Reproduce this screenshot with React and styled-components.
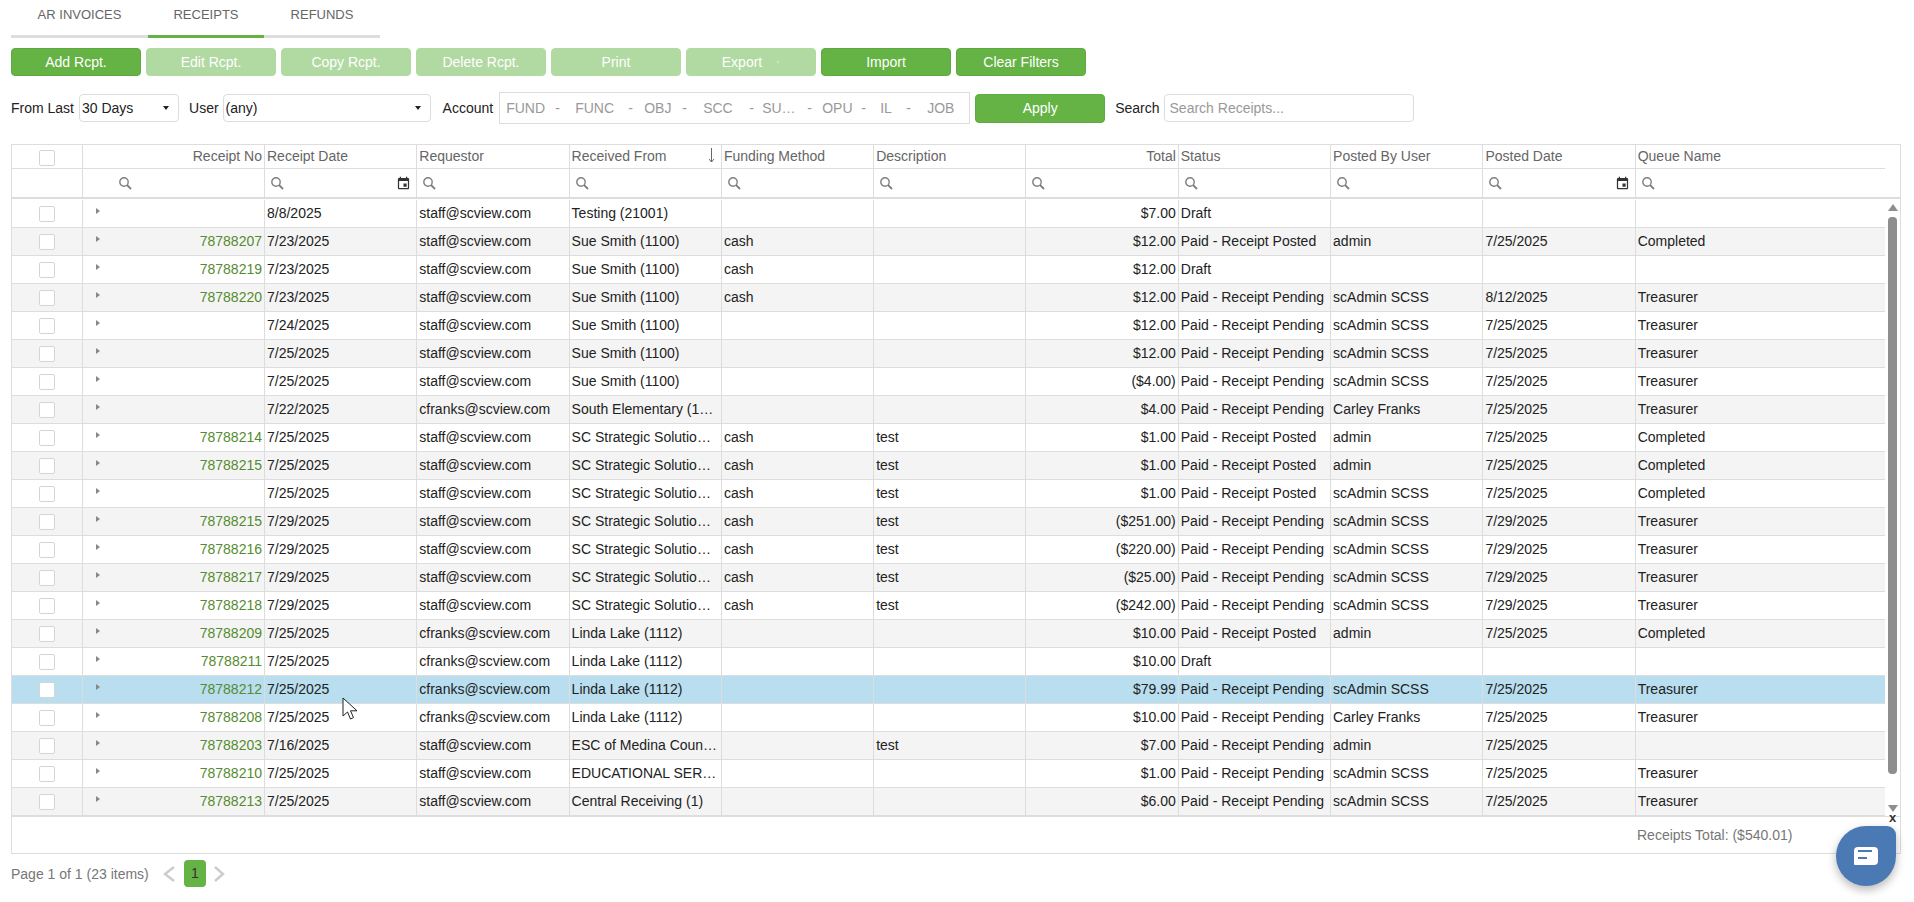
import React from "react";
import styled, { createGlobalStyle } from "styled-components";

const GlobalStyle = createGlobalStyle`
  html, body {
    margin: 0;
    padding: 0;
    background: #fff;
    overflow: hidden;
  }
  body {
    font-family: "Liberation Sans", Arial, sans-serif;
    font-size: 14px;
    color: #222;
  }
  * {
    box-sizing: border-box;
  }
`;

const STAFF = "staff@scview.com";
const CF = "cfranks@scview.com";
const SUE = "Sue Smith (1100)";
const SC = "SC Strategic Solutio…";
const LINDA = "Linda Lake (1112)";
const POSTED = "Paid - Receipt Posted";
const PENDING = "Paid - Receipt Pending";
const SCADMIN = "scAdmin SCSS";

const receipts = [
  ["", "8/8/2025", STAFF, "Testing (21001)", "", "", "$7.00", "Draft", "", "", ""],
  ["78788207", "7/23/2025", STAFF, SUE, "cash", "", "$12.00", POSTED, "admin", "7/25/2025", "Completed"],
  ["78788219", "7/23/2025", STAFF, SUE, "cash", "", "$12.00", "Draft", "", "", ""],
  ["78788220", "7/23/2025", STAFF, SUE, "cash", "", "$12.00", PENDING, SCADMIN, "8/12/2025", "Treasurer"],
  ["", "7/24/2025", STAFF, SUE, "", "", "$12.00", PENDING, SCADMIN, "7/25/2025", "Treasurer"],
  ["", "7/25/2025", STAFF, SUE, "", "", "$12.00", PENDING, SCADMIN, "7/25/2025", "Treasurer"],
  ["", "7/25/2025", STAFF, SUE, "", "", "($4.00)", PENDING, SCADMIN, "7/25/2025", "Treasurer"],
  ["", "7/22/2025", CF, "South Elementary (1…", "", "", "$4.00", PENDING, "Carley Franks", "7/25/2025", "Treasurer"],
  ["78788214", "7/25/2025", STAFF, SC, "cash", "test", "$1.00", POSTED, "admin", "7/25/2025", "Completed"],
  ["78788215", "7/25/2025", STAFF, SC, "cash", "test", "$1.00", POSTED, "admin", "7/25/2025", "Completed"],
  ["", "7/25/2025", STAFF, SC, "cash", "test", "$1.00", POSTED, SCADMIN, "7/25/2025", "Completed"],
  ["78788215", "7/29/2025", STAFF, SC, "cash", "test", "($251.00)", PENDING, SCADMIN, "7/29/2025", "Treasurer"],
  ["78788216", "7/29/2025", STAFF, SC, "cash", "test", "($220.00)", PENDING, SCADMIN, "7/29/2025", "Treasurer"],
  ["78788217", "7/29/2025", STAFF, SC, "cash", "test", "($25.00)", PENDING, SCADMIN, "7/29/2025", "Treasurer"],
  ["78788218", "7/29/2025", STAFF, SC, "cash", "test", "($242.00)", PENDING, SCADMIN, "7/29/2025", "Treasurer"],
  ["78788209", "7/25/2025", CF, LINDA, "", "", "$10.00", POSTED, "admin", "7/25/2025", "Completed"],
  ["78788211", "7/25/2025", CF, LINDA, "", "", "$10.00", "Draft", "", "", ""],
  ["78788212", "7/25/2025", CF, LINDA, "", "", "$79.99", PENDING, SCADMIN, "7/25/2025", "Treasurer"],
  ["78788208", "7/25/2025", CF, LINDA, "", "", "$10.00", PENDING, "Carley Franks", "7/25/2025", "Treasurer"],
  ["78788203", "7/16/2025", STAFF, "ESC of Medina Coun…", "", "test", "$7.00", PENDING, "admin", "7/25/2025", ""],
  ["78788210", "7/25/2025", STAFF, "EDUCATIONAL SER…", "", "", "$1.00", PENDING, SCADMIN, "7/25/2025", "Treasurer"],
  ["78788213", "7/25/2025", STAFF, "Central Receiving (1)", "", "", "$6.00", PENDING, SCADMIN, "7/25/2025", "Treasurer"],
];

const SELECTED_ROW = 17;

const headers = [
  "Receipt Date", "Requestor", "Received From", "Funding Method", "Description",
  "Total", "Status", "Posted By User", "Posted Date", "Queue Name",
];

const actions = [
  { label: "Add Rcpt." },
  { label: "Edit Rcpt.", off: true },
  { label: "Copy Rcpt.", off: true },
  { label: "Delete Rcpt.", off: true },
  { label: "Print", off: true },
  { label: "Export", off: true, caret: true },
  { label: "Import" },
  { label: "Clear Filters" },
];

// [code, text width, dash width]
const accountParts = [
  ["FUND", 49, 20], ["FUNC", 53, 16], ["OBJ", 38, 21], ["SCC", 46, 13], ["SU…", 45, 15],
  ["OPU", 39, 19], ["IL", 26, 21], ["JOB", 30, 0],
];

const COLUMNS = "71px 182px repeat(9, 152.3px) 1fr";

const Page = styled.div`
  width: 1914px;
  height: 902px;
  position: relative;
  overflow: hidden;
  padding: 0 13px 0 11px;
`;

const Tabs = styled.div`
  display: flex;
  height: 38px;
`;

const Tab = styled.div`
  width: ${(p) => p.$w}px;
  height: 38px;
  padding-top: 7px;
  text-align: center;
  font-size: 13px;
  line-height: 16px;
  color: #666;
  border-bottom: 3px solid ${(p) => (p.$active ? "#65b345" : "#ddd")};
`;

const ActionBar = styled.div`
  display: flex;
  gap: 5px;
  margin-top: 10px;
`;

const Button = styled.button`
  width: 130px;
  height: ${(p) => p.$h || 28}px;
  display: inline-flex;
  align-items: center;
  justify-content: center;
  gap: 14px;
  padding: 0;
  border: 1px solid ${(p) => (p.$off ? "#b1d9a2" : "#5dab3e")};
  border-radius: 4px;
  background: ${(p) => (p.$off ? "#b1d9a2" : "#65b345")};
  color: #fff;
  font-family: inherit;
  font-size: 14px;
`;

const ButtonCaret = styled.span`
  width: 0;
  height: 0;
  border-left: 2.5px solid transparent;
  border-right: 2.5px solid transparent;
  border-top: 3px solid #c9e4be;
`;

const FilterBar = styled.div`
  display: flex;
  align-items: center;
  height: 32px;
  margin-top: 16px;
`;

const Label = styled.span`
  margin-left: ${(p) => p.$ml || 0}px;
  margin-right: ${(p) => p.$mr || 0}px;
  white-space: nowrap;
  color: #222;
`;

const Select = styled.div`
  position: relative;
  width: ${(p) => p.$w}px;
  height: 28px;
  line-height: 26px;
  padding-left: 2px;
  border: 1px solid #ddd;
  border-radius: 4px;
  color: #222;
  background: #fff;
`;

const SelectCaret = styled.span`
  position: absolute;
  right: 9px;
  top: 11px;
  width: 0;
  height: 0;
  border-left: 3px solid transparent;
  border-right: 3px solid transparent;
  border-top: 4px solid #222;
`;

const AccountBox = styled.div`
  display: flex;
  align-items: center;
  width: 471px;
  height: 32px;
  margin-right: 5px;
  padding-left: 6px;
  border: 1px solid #ddd;
  color: #999;
`;

const AccountPart = styled.span`
  width: ${(p) => p.$w}px;
  white-space: nowrap;
`;

const SearchInput = styled.input`
  width: 250px;
  height: 28px;
  margin-left: 4px;
  padding: 0 5px;
  border: 1px solid #ddd;
  border-radius: 4px;
  font-family: inherit;
  font-size: 14px;
  &::placeholder {
    color: #999;
    opacity: 1;
  }
`;

const Grid = styled.div`
  margin-top: 20px;
  height: 710px;
  border: 1px solid #ddd;
`;

const GridHead = styled.div`
  padding-right: 15px;
  border-bottom: 2px solid #ddd;
`;

const HeadRow = styled.div`
  display: grid;
  grid-template-columns: ${COLUMNS};
  height: ${(p) => p.$h}px;
  border-bottom: ${(p) => (p.$last ? "none" : "1px solid #ddd")};
`;

const HeadCell = styled.div`
  position: relative;
  display: flex;
  align-items: center;
  justify-content: ${(p) => (p.$right ? "flex-end" : "flex-start")};
  padding: 0 2px 1px;
  color: #666;
  white-space: nowrap;
  border-right: ${(p) => (p.$last ? "none" : "1px solid #ddd")};
`;

const CheckCell = styled.div`
  display: flex;
  align-items: center;
  justify-content: center;
  padding-top: ${(p) => p.$pt || 0}px;
  border-right: 1px solid #ddd;
`;

const Checkbox = styled.span`
  display: block;
  width: 16px;
  height: 16px;
  border: 1px solid #d5d5d5;
  border-radius: 2px;
  background: #fff;
`;

const FilterCell = styled.div`
  display: flex;
  align-items: center;
  justify-content: space-between;
  padding: 0 5px 0 ${(p) => p.$pl || 6}px;
  border-right: ${(p) => (p.$last ? "none" : "1px solid #ddd")};
`;

const SortArrow = styled.svg`
  position: absolute;
  right: 6px;
  top: 3px;
`;

const GridBody = styled.div`
  display: flex;
  height: 617px;
`;

const Rows = styled.div`
  flex: 1;
  min-width: 0;
  padding-top: 1px;
`;

const Row = styled.div`
  display: grid;
  grid-template-columns: ${COLUMNS};
  height: 28px;
  border-bottom: 1px solid #ddd;
  background: ${(p) => (p.$selected ? "#b8deef" : p.$odd ? "#f4f4f4" : "#fff")};
`;

const Cell = styled.div`
  padding: 0 2px;
  line-height: 27px;
  white-space: nowrap;
  overflow: hidden;
  text-overflow: ellipsis;
  text-align: ${(p) => (p.$right ? "right" : "left")};
  color: ${(p) => (p.$link ? "#558b2f" : "#222")};
  border-right: ${(p) => (p.$last ? "none" : "1px solid #ddd")};
`;

const NumberCell = styled(Cell)`
  position: relative;
`;

const Expander = styled.span`
  position: absolute;
  left: 13px;
  top: 8px;
  width: 0;
  height: 0;
  border-top: 3px solid transparent;
  border-bottom: 3px solid transparent;
  border-left: 4px solid #888;
`;

const ScrollBar = styled.div`
  width: 15px;
  display: flex;
  flex-direction: column;
  align-items: center;
  padding-top: 5px;
`;

const ScrollUp = styled.span`
  width: 0;
  height: 0;
  border-left: 5px solid transparent;
  border-right: 5px solid transparent;
  border-bottom: 7px solid #8e8e8e;
`;

const ScrollDown = styled(ScrollUp)`
  border-bottom: none;
  border-top: 7px solid #8e8e8e;
`;

const ScrollThumb = styled.div`
  width: 9px;
  height: 557px;
  margin: 6px 0 31px;
  border-radius: 4px;
  background: #8e8e8e;
`;

const GridFooter = styled.div`
  display: flex;
  align-items: center;
  height: 37px;
  padding-left: 1625px;
  border-top: 1px solid #ddd;
  color: #777;
  white-space: nowrap;
`;

const Pager = styled.div`
  display: flex;
  align-items: center;
  height: 27px;
  margin-top: 6px;
  color: #777;
`;

const PageInfo = styled.span`
  width: 152px;
  white-space: nowrap;
`;

const PageLink = styled.span`
  width: 22px;
  height: 27px;
  margin: 0 8px 0 9px;
  line-height: 27px;
  text-align: center;
  color: #333;
  background: #65b345;
  border-radius: 4px;
`;

const ChatButton = styled.div`
  position: absolute;
  left: 1836px;
  top: 826px;
  width: 60px;
  height: 60px;
  display: flex;
  align-items: center;
  justify-content: center;
  border-radius: 50% 9px 50% 50%;
  background: #4a79b4;
  box-shadow: 0 4px 10px rgba(0, 0, 0, 0.28);
`;

const ChatClose = styled.span`
  position: absolute;
  left: 1889px;
  top: 811px;
  font-size: 13px;
  font-weight: bold;
  line-height: 13px;
  color: #333;
`;

const Cursor = styled.svg`
  position: absolute;
  left: 342px;
  top: 697px;
`;

function SearchIcon() {
  return (
    <svg width="13" height="13" viewBox="0 0 13 13" fill="none" stroke="#7f7f7f">
      <circle cx="5" cy="5" r="4.2" strokeWidth="1.4" />
      <path d="M8 8l4 4" strokeWidth="1.8" />
    </svg>
  );
}

function CalendarIcon() {
  return (
    <svg width="15" height="15" viewBox="0 0 24 24" fill="#333">
      <path d="M17 12h-5v5h5v-5zM16 1v2H8V1H6v2H5c-1.11 0-1.99.9-1.99 2L3 19c0 1.1.89 2 2 2h14c1.1 0 2-.9 2-2V5c0-1.1-.9-2-2-2h-1V1h-2zm3 18H5V8h14v11z" />
    </svg>
  );
}

function Chevron({ flip }) {
  return (
    <svg width="12" height="16" viewBox="0 0 12 16" fill="none" stroke="#ccc" strokeWidth="2.4">
      <path d={flip ? "M1 1l8 7-8 7" : "M11 1L2 8l9 7"} />
    </svg>
  );
}

function ReceiptRow({ data, index }) {
  const [receiptNo, ...rest] = data;
  return (
    <Row $odd={index % 2 === 1} $selected={index === SELECTED_ROW}>
      <CheckCell $pt={1}>
        <Checkbox />
      </CheckCell>
      <NumberCell $right $link>
        <Expander />
        {receiptNo}
      </NumberCell>
      {rest.map((value, i) => (
        <Cell key={i} $right={i === 5} $last={i === rest.length - 1}>
          {value}
        </Cell>
      ))}
    </Row>
  );
}

export default function App() {
  return (
    <Page>
      <GlobalStyle />
      <Tabs>
        <Tab $w={137}>AR INVOICES</Tab>
        <Tab $w={116} $active>RECEIPTS</Tab>
        <Tab $w={116}>REFUNDS</Tab>
      </Tabs>

      <ActionBar>
        {actions.map((a) => (
          <Button key={a.label} $off={a.off}>
            {a.label}
            {a.caret && <ButtonCaret />}
          </Button>
        ))}
      </ActionBar>

      <FilterBar>
        <Label $mr={5}>From Last</Label>
        <Select $w={100}>
          30 Days
          <SelectCaret />
        </Select>
        <Label $ml={10} $mr={4}>User</Label>
        <Select $w={208}>
          (any)
          <SelectCaret />
        </Select>
        <Label $ml={12} $mr={6}>Account</Label>
        <AccountBox>
          {accountParts.map(([code, w, dash]) => (
            <React.Fragment key={code}>
              <AccountPart $w={w}>{code}</AccountPart>
              {dash > 0 && <AccountPart $w={dash}>-</AccountPart>}
            </React.Fragment>
          ))}
        </AccountBox>
        <Button $h={29}>Apply</Button>
        <Label $ml={10}>Search</Label>
        <SearchInput placeholder="Search Receipts..." />
      </FilterBar>

      <Grid>
        <GridHead>
          <HeadRow $h={24}>
            <CheckCell $pt={3}>
              <Checkbox />
            </CheckCell>
            <HeadCell $right>Receipt No</HeadCell>
            {headers.map((h, i) => (
              <HeadCell key={h} $right={h === "Total"} $last={i === headers.length - 1}>
                {h}
                {h === "Received From" && (
                  <SortArrow width="7" height="15" viewBox="0 0 7 15" fill="none" stroke="#666">
                    <path d="M3.5 0v14M1 11l2.5 3L6 11" />
                  </SortArrow>
                )}
              </HeadCell>
            ))}
          </HeadRow>
          <HeadRow $h={28} $last>
            <CheckCell />
            <FilterCell $pl={36}>
              <SearchIcon />
            </FilterCell>
            {headers.map((h, i) => (
              <FilterCell key={h} $last={i === headers.length - 1}>
                <SearchIcon />
                {h.endsWith("Date") && <CalendarIcon />}
              </FilterCell>
            ))}
          </HeadRow>
        </GridHead>

        <GridBody>
          <Rows>
            {receipts.map((r, i) => (
              <ReceiptRow key={i} data={r} index={i} />
            ))}
          </Rows>
          <ScrollBar>
            <ScrollUp />
            <ScrollThumb />
            <ScrollDown />
          </ScrollBar>
        </GridBody>

        <GridFooter>Receipts Total: ($540.01)</GridFooter>
      </Grid>

      <Pager>
        <PageInfo>Page 1 of 1 (23 items)</PageInfo>
        <Chevron />
        <PageLink>1</PageLink>
        <Chevron flip />
      </Pager>

      <ChatClose>x</ChatClose>
      <ChatButton>
        <svg width="24" height="18" viewBox="0 0 24 18">
          <path d="M4 0h16a4 4 0 0 1 4 4v10a4 4 0 0 1-4 4H1a1 1 0 0 1-1-1V4a4 4 0 0 1 4-4z" fill="#fff" />
          <path d="M4 4h14M4 11h9" stroke="#4a79b4" strokeWidth="2.2" />
        </svg>
      </ChatButton>

      <Cursor width="16" height="24" viewBox="0 0 16 24">
        <path d="M1 1v18l4.5-4 3 7 3-1.4-3-6.8H15z" fill="#fff" stroke="#222" strokeWidth="1" />
      </Cursor>
    </Page>
  );
}
